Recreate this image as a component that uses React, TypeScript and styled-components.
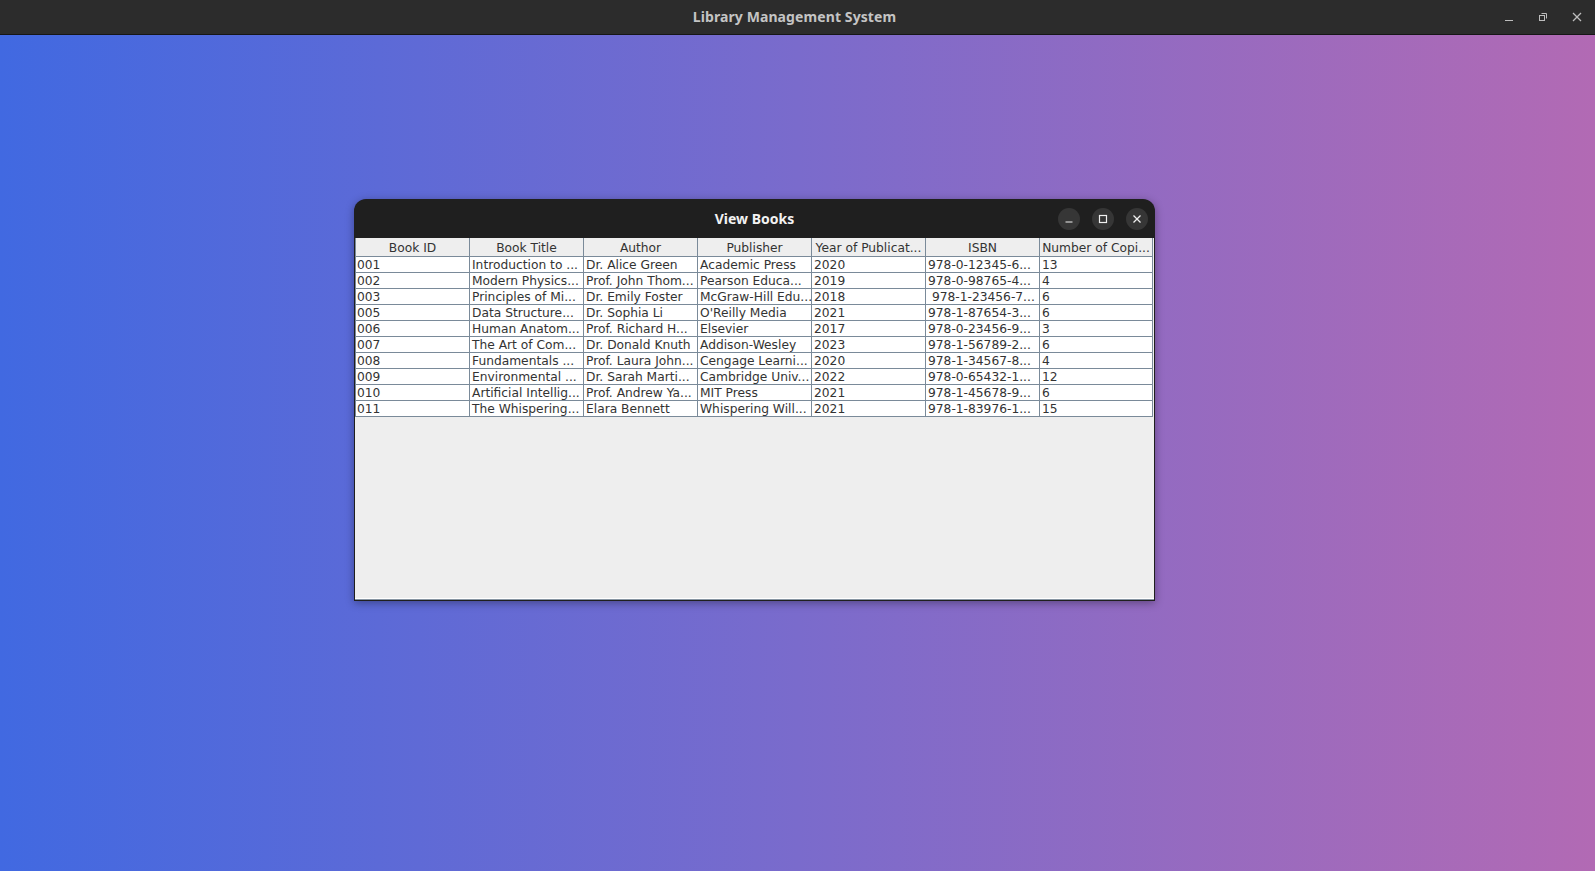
import React from "react";
import styled, { createGlobalStyle } from "styled-components";

const Global = createGlobalStyle`
  html, body { margin: 0; padding: 0; }
  body { width: 1595px; height: 871px; overflow: hidden; font-family: "DejaVu Sans", sans-serif; }
`;

const Page = styled.div`
  width: 1595px;
  height: 871px;
  display: flex;
  flex-direction: column;
  background: linear-gradient(to right, #4169e1 0%, #7a6bcc 50%, #b26ab4 100%);
`;

const TopBar = styled.div`
  height: 34px;
  flex: none;
  background: #2c2c2c;
  border-bottom: 1px solid #161616;
  display: flex;
  align-items: center;
  position: relative;
`;

const TopTitle = styled.div`
  flex: 1;
  text-align: center;
  font-family: "Noto Sans", "Open Sans", sans-serif;
  font-weight: 700;
  font-size: 14px;
  color: #c4c4c4;
  padding-right: 6px;
  padding-bottom: 2px;
  letter-spacing: 0.1px;
`;

const TopControls = styled.div`
  position: absolute;
  right: 10px;
  top: 0;
  height: 34px;
  display: flex;
  align-items: center;
  gap: 17px;
`;

const TopBtn = styled.div`
  width: 17px;
  height: 17px;
  display: flex;
  align-items: center;
  justify-content: center;
`;

const Main = styled.div`
  flex: 1;
  padding: 164px 0 0 354px;
`;

const Dialog = styled.div`
  width: 801px;
  height: 402px;
  display: flex;
  flex-direction: column;
  background: #1f1f1f;
  border-radius: 12px 12px 0 0;
  box-shadow: 0 2px 8px rgba(0, 0, 0, 0.35);
  overflow: hidden;
`;

const TitleBar = styled.div`
  height: 39px;
  flex: none;
  display: flex;
  align-items: center;
  position: relative;
`;

const DialogTitle = styled.div`
  flex: 1;
  text-align: center;
  font-family: "Noto Sans", "Open Sans", sans-serif;
  font-weight: 700;
  font-size: 14px;
  color: #f2f2f2;
`;

const DialogControls = styled.div`
  position: absolute;
  right: 7px;
  top: 9px;
  display: flex;
  gap: 12px;
`;

const CircleBtn = styled.div`
  width: 22px;
  height: 22px;
  border-radius: 50%;
  background: #363636;
  display: flex;
  align-items: center;
  justify-content: center;
`;

const Body = styled.div`
  flex: 1;
  margin: 0 1px 1px 1px;
  background: #eeeeee;
  border-bottom: 1px solid #8896a3;
  box-shadow: inset 0 -1px 0 #ffffff;
  display: flex;
  flex-direction: column;
`;

const Grid = styled.div`
  display: grid;
  grid-template-columns: 115px repeat(5, 114px) 113px;
  width: 798px;
`;

const HeaderCell = styled.div`
  height: 18px;
  line-height: 20px;
  background: #eeeeee;
  border-right: 1px solid #7a8a99;
  border-bottom: 1px solid #7a8a99;
  text-align: center;
  font-size: 12.25px;
  color: #333333;
  white-space: nowrap;
  overflow: hidden;
  &:first-child { border-left: 1px solid #7a8a99; }
`;

const Cell = styled.div<{ $first?: boolean }>`
  height: 15px;
  line-height: 16px;
  background: #ffffff;
  border-right: 1px solid #7a8a99;
  border-bottom: 1px solid #7a8a99;
  padding-left: 2px;
  font-size: 12.25px;
  color: #333333;
  white-space: pre;
  overflow: hidden;
  ${(p) => (p.$first ? "border-left: 1px solid #7a8a99; padding-left: 1px;" : "")}
`;

const headers = [
  "Book ID",
  "Book Title",
  "Author",
  "Publisher",
  "Year of Publicat...",
  "ISBN",
  "Number of Copi...",
];

const rows: string[][] = [
  ["001", "Introduction to ...", "Dr. Alice Green", "Academic Press", "2020", "978-0-12345-6...", "13"],
  ["002", "Modern Physics...", "Prof. John Thom...", "Pearson Educa...", "2019", "978-0-98765-4...", "4"],
  ["003", "Principles of Mi...", "Dr. Emily Foster", "McGraw-Hill Edu...", "2018", " 978-1-23456-7...", "6"],
  ["005", "Data Structure...", "Dr. Sophia Li", "O'Reilly Media", "2021", "978-1-87654-3...", "6"],
  ["006", "Human Anatom...", "Prof. Richard H...", "Elsevier", "2017", "978-0-23456-9...", "3"],
  ["007", "The Art of Com...", "Dr. Donald Knuth", "Addison-Wesley", "2023", "978-1-56789-2...", "6"],
  ["008", "Fundamentals ...", "Prof. Laura John...", "Cengage Learni...", "2020", "978-1-34567-8...", "4"],
  ["009", "Environmental ...", "Dr. Sarah Marti...", "Cambridge Univ...", "2022", "978-0-65432-1...", "12"],
  ["010", "Artificial Intellig...", "Prof. Andrew Ya...", "MIT Press", "2021", "978-1-45678-9...", "6"],
  ["011", "The Whispering...", "Elara Bennett", "Whispering Will...", "2021", "978-1-83976-1...", "15"],
];

const icon = "#bdbdbd";
const dIcon = "#f0f0f0";

export default function App() {
  return (
    <>
      <Global />
      <Page>
        <TopBar>
          <TopTitle>Library Management System</TopTitle>
          <TopControls>
            <TopBtn>
              <svg width="10" height="10" viewBox="0 0 10 10">
                <line x1="1" y1="8.5" x2="9" y2="8.5" stroke={icon} strokeWidth="1" />
              </svg>
            </TopBtn>
            <TopBtn>
              <svg width="10" height="10" viewBox="0 0 10 10">
                <rect x="1.5" y="3.5" width="5" height="5" fill="none" stroke={icon} strokeWidth="1" />
                <polyline points="3.5,1.5 8.5,1.5 8.5,6.5" fill="none" stroke={icon} strokeWidth="1" />
              </svg>
            </TopBtn>
            <TopBtn>
              <svg width="10" height="10" viewBox="0 0 10 10">
                <line x1="1" y1="1" x2="9" y2="9" stroke={icon} strokeWidth="1.2" />
                <line x1="9" y1="1" x2="1" y2="9" stroke={icon} strokeWidth="1.2" />
              </svg>
            </TopBtn>
          </TopControls>
        </TopBar>
        <Main>
          <Dialog>
            <TitleBar>
              <DialogTitle>View Books</DialogTitle>
              <DialogControls>
                <CircleBtn>
                  <svg width="10" height="10" viewBox="0 0 10 10">
                    <line x1="1.5" y1="8" x2="8.5" y2="8" stroke={dIcon} strokeWidth="1.2" />
                  </svg>
                </CircleBtn>
                <CircleBtn>
                  <svg width="10" height="10" viewBox="0 0 10 10">
                    <rect x="1.5" y="1.5" width="7" height="7" fill="none" stroke={dIcon} strokeWidth="1.2" />
                  </svg>
                </CircleBtn>
                <CircleBtn>
                  <svg width="10" height="10" viewBox="0 0 10 10">
                    <line x1="1.5" y1="1.5" x2="8.5" y2="8.5" stroke={dIcon} strokeWidth="1.3" />
                    <line x1="8.5" y1="1.5" x2="1.5" y2="8.5" stroke={dIcon} strokeWidth="1.3" />
                  </svg>
                </CircleBtn>
              </DialogControls>
            </TitleBar>
            <Body>
              <Grid>
                {headers.map((h) => (
                  <HeaderCell key={h}>{h}</HeaderCell>
                ))}
                {rows.map((r, i) =>
                  r.map((c, j) => (
                    <Cell key={`${i}-${j}`} $first={j === 0}>
                      {c}
                    </Cell>
                  ))
                )}
              </Grid>
            </Body>
          </Dialog>
        </Main>
      </Page>
    </>
  );
}
